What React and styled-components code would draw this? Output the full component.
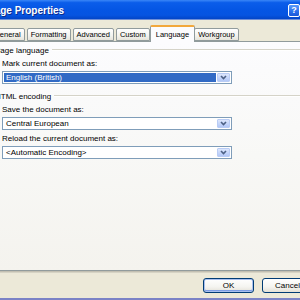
import React from 'react'
import styled, { createGlobalStyle } from 'styled-components'

const Global = createGlobalStyle`
  html, body {
    margin: 0;
    padding: 0;
    width: 300px;
    height: 300px;
    overflow: hidden;
    background: #ECE9D8;
  }
  body {
    font-family: "Liberation Sans", Arial, sans-serif;
  }
`

const Window = styled.div`
  margin-left: -20px;
  width: 342px;
  height: 300px;
  box-sizing: border-box;
  display: flex;
  flex-direction: column;
  background: #ECE9D8;
  border-bottom: 2px solid #7B83C6;
`

const TitleBar = styled.div`
  flex: none;
  height: 20px;
  box-sizing: border-box;
  display: flex;
  align-items: center;
  padding: 1px 22px 0 8px;
  background: linear-gradient(180deg, #3A86F7 0%, #0B5DEA 14%, #0556E4 50%, #0654E1 80%, #0345C7 100%);
  border-bottom: 1px solid #6F8FD8;
`

const Title = styled.span`
  flex: 1;
  color: #fff;
  font-weight: bold;
  font-size: 10px;
  text-shadow: 1px 1px 0 #0C2C8C;
`

const HelpButton = styled.div`
  width: 12px;
  height: 13px;
  box-sizing: border-box;
  border: 1px solid #fff;
  border-radius: 2px;
  display: flex;
  align-items: center;
  justify-content: center;
  color: #fff;
  font-weight: bold;
  font-size: 9px;
  background: linear-gradient(180deg, #5B9BFB 0%, #2A6EEA 60%, #1A57D8 100%);
`

const TabRow = styled.div`
  flex: none;
  height: 16px;
  margin-top: 5px;
  padding-left: 10px;
  display: flex;
  align-items: flex-end;
  position: relative;
  z-index: 1;
`

const Tab = styled.div`
  height: ${p => (p.$active ? '17px' : '13px')};
  margin: ${p => (p.$active ? '0 -1px -1px -2px' : '0 2px 0 0')};
  padding: ${p => (p.$active ? '0 5px' : '0 3px')};
  box-sizing: border-box;
  display: flex;
  align-items: center;
  font-size: 7.5px;
  color: #000;
  border: 1px solid #919B9C;
  border-bottom: ${p => (p.$active ? 'none' : '1px solid #919B9C')};
  border-top: ${p => (p.$active ? '2px solid #F2A83C' : '1px solid #919B9C')};
  border-radius: 2px 2px 0 0;
  background: ${p => (p.$active
    ? '#FCFCFE'
    : 'linear-gradient(180deg, #FFFFFF 0%, #F3F3EF 60%, #E6E4DA 100%)')};
`

const Panel = styled.div`
  flex: none;
  height: 230px;
  margin: 0 8px;
  box-sizing: border-box;
  border: 1px solid #919B9C;
  background: linear-gradient(180deg, #FCFCFE 0%, #F8F8F6 50%, #F4F3EE 100%);
  box-shadow: 0 1px 0 #C2BFB1, 0 2px 0 #D6D3C4;
  padding: 3px 0 0 6px;
  display: flex;
  flex-direction: column;
`

const Header = styled.div`
  display: flex;
  align-items: center;
  height: 10px;
  margin-top: ${p => p.$gap || 0}px;
  font-size: 8px;
  color: #000;
  &::after {
    content: '';
    flex: 1;
    margin-left: 3px;
    border-top: 1px solid #D5D3C8;
    border-bottom: 1px solid #FFFFFF;
  }
`

const Group = styled.div`
  padding-left: 7px;
  display: flex;
  flex-direction: column;
`

const Field = styled.div`
  margin-top: 4px;
  display: flex;
  flex-direction: column;
  gap: 2px;
`

const Label = styled.div`
  height: 10px;
  line-height: 10px;
  font-size: 8px;
  color: #000;
`

const Combo = styled.div`
  width: 230px;
  height: 13px;
  box-sizing: border-box;
  border: 1px solid #7F9DB9;
  background: #fff;
  display: flex;
  align-items: stretch;
  padding: 1px;
`

const ComboText = styled.div`
  flex: 1;
  margin-right: 1px;
  padding-left: 2px;
  display: flex;
  align-items: center;
  font-size: 8px;
  color: ${p => (p.$selected ? '#fff' : '#000')};
  background: ${p => (p.$selected ? '#316AC5' : 'transparent')};
`

const DropButton = styled.div`
  width: 13px;
  box-sizing: border-box;
  border: 1px solid #B9CCF5;
  border-radius: 1px;
  background: linear-gradient(180deg, #DCE6FC 0%, #C4D5FA 55%, #B3C8F7 100%);
  display: flex;
  align-items: center;
  justify-content: center;
`

const Footer = styled.div`
  flex: none;
  margin-top: 7px;
  padding-right: 9px;
  display: flex;
  justify-content: flex-end;
  gap: 8px;
`

const Button = styled.div`
  width: 51px;
  height: 15px;
  box-sizing: border-box;
  border: 1px solid #003C74;
  border-radius: 3px;
  display: flex;
  align-items: center;
  justify-content: center;
  font-size: 8px;
  color: #000;
  background: linear-gradient(180deg, #FFFFFF 0%, #F4F4F0 60%, #E3E0D6 100%);
  box-shadow: ${p => (p.$default ? 'inset 0 0 0 1px #A9C0EE, inset 0 -1px 0 1px #7C9DE4' : 'none')};
`

function Chevron() {
  return (
    <svg width="7" height="5" viewBox="0 0 7 5">
      <path d="M1 1 L3.5 3.5 L6 1" fill="none" stroke="#4D6185" strokeWidth="1.6" />
    </svg>
  )
}

function Select({ value, selected }) {
  return (
    <Combo>
      <ComboText $selected={selected}>{value}</ComboText>
      <DropButton><Chevron /></DropButton>
    </Combo>
  )
}

const tabs = ['General', 'Formatting', 'Advanced', 'Custom', 'Language', 'Workgroup']

export default function App() {
  return (
    <>
      <Global />
      <Window>
        <TitleBar>
          <Title>Page Properties</Title>
          <HelpButton>?</HelpButton>
        </TitleBar>
        <TabRow>
          {tabs.map(t => (
            <Tab key={t} $active={t === 'Language'}>{t}</Tab>
          ))}
        </TabRow>
        <Panel>
          <Header>Page language</Header>
          <Group>
            <Field>
              <Label>Mark current document as:</Label>
              <Select value="English (British)" selected />
            </Field>
          </Group>
          <Header $gap={7}>HTML encoding</Header>
          <Group>
            <Field>
              <Label>Save the document as:</Label>
              <Select value="Central European" />
            </Field>
            <Field>
              <Label>Reload the current document as:</Label>
              <Select value="<Automatic Encoding>" />
            </Field>
          </Group>
        </Panel>
        <Footer>
          <Button $default>OK</Button>
          <Button>Cancel</Button>
        </Footer>
      </Window>
    </>
  )
}
